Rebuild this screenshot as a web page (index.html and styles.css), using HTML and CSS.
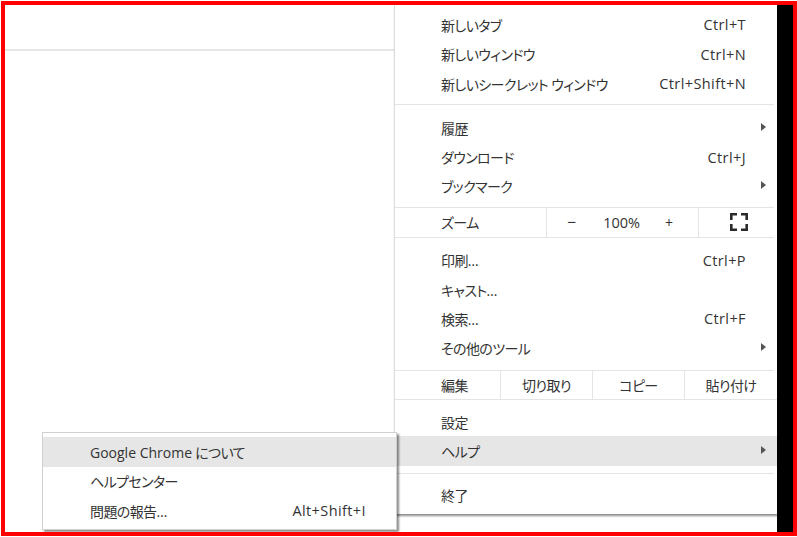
FILE: index.html
```html
<!DOCTYPE html>
<html lang="ja">
<head>
<meta charset="utf-8">
<title>Chrome menu</title>
<link rel="stylesheet" href="styles.css">
</head>
<body>
<div class="frame">
  <div class="page">
    <div class="toolbar"></div>
  </div>
  <div class="menu">
    <div class="item"><span class="label">新しいタブ</span><span class="key">Ctrl+T</span></div>
    <div class="item"><span class="label">新しいウィンドウ</span><span class="key">Ctrl+N</span></div>
    <div class="item"><span class="label">新しいシークレット ウィンドウ</span><span class="key">Ctrl+Shift+N</span></div>
    <div class="sep sep-a"></div>
    <div class="item"><span class="label">履歴</span><svg class="arrow" width="5" height="8" viewBox="0 0 5 8"><polygon points="0,0 5,4 0,8"/></svg></div>
    <div class="item"><span class="label">ダウンロード</span><span class="key">Ctrl+J</span></div>
    <div class="item"><span class="label">ブックマーク</span><svg class="arrow" width="5" height="8" viewBox="0 0 5 8"><polygon points="0,0 5,4 0,8"/></svg></div>
    <div class="sep sep-b"></div>
    <div class="zoomrow">
      <div class="cell cell-label">ズーム</div>
      <div class="cell zoomctl"><span class="minus">−</span><span class="pct">100%</span><span class="plus">+</span></div>
      <div class="cell cell-fs">
        <svg width="18" height="18" viewBox="0 0 18 18" fill="none" stroke="#2b2b2b" stroke-width="2.6">
          <path d="M1.3 7V1.3H7"/>
          <path d="M11 1.3H16.7V7"/>
          <path d="M1.3 11V16.7H7"/>
          <path d="M11 16.7H16.7V11"/>
        </svg>
      </div>
    </div>
    <div class="group-c">
      <div class="item"><span class="label">印刷…</span><span class="key">Ctrl+P</span></div>
      <div class="item"><span class="label">キャスト…</span></div>
      <div class="item"><span class="label">検索…</span><span class="key">Ctrl+F</span></div>
      <div class="item"><span class="label">その他のツール</span><svg class="arrow" width="5" height="8" viewBox="0 0 5 8"><polygon points="0,0 5,4 0,8"/></svg></div>
    </div>
    <div class="sep sep-c"></div>
    <div class="editrow">
      <div class="cell cell-label">編集</div>
      <div class="cell">切り取り</div>
      <div class="cell">コピー</div>
      <div class="cell">貼り付け</div>
    </div>
    <div class="group-d">
      <div class="item"><span class="label">設定</span></div>
      <div class="item hl"><span class="label">ヘルプ</span><svg class="arrow" width="5" height="8" viewBox="0 0 5 8"><polygon points="0,0 5,4 0,8"/></svg></div>
    </div>
    <div class="sep sep-d"></div>
    <div class="item"><span class="label">終了</span></div>
  </div>
  <div class="blackbar"></div>

  <div class="submenu">
    <div class="sitem hl"><span class="label"><span class="lat">Google Chrome</span> について</span></div>
    <div class="sitem"><span class="label">ヘルプセンター</span></div>
    <div class="sitem"><span class="label">問題の報告…</span><span class="skey">Alt+Shift+I</span></div>
  </div>
</div>
</body>
</html>
```

FILE: styles.css
```css
* { box-sizing: border-box; }

html, body {
  margin: 0;
  padding: 0;
  background: #ffffff;
}

body {
  font-family: "Open Sans", "Noto Sans CJK JP", sans-serif;
  font-size: 14px;
  font-feature-settings: "palt";
  color: #333333;
}

.frame {
  position: relative;
  margin: 1px 0 0 1px;
  width: 796px;
  height: 535px;
  border: 4px solid #ff0000;
  background: #ffffff;
  display: flex;
  align-items: flex-start;
  overflow: hidden;
}

.page {
  flex: 1;
  align-self: stretch;
}

.toolbar {
  height: 46px;
  border-bottom: 2px solid #e6e6e6;
}

.menu {
  width: 383px;
  flex: none;
  background: #ffffff;
  border-left: 1px solid #dcdcdc;
  padding: 5.3px 0 4px;
  box-shadow: 1px 2px 2px rgba(0, 0, 0, 0.45);
}

.blackbar {
  width: 16px;
  flex: none;
  align-self: stretch;
  background: #000000;
}

.item {
  display: flex;
  align-items: center;
  height: 29.3px;
  padding: 0 11px 0 46px;
  white-space: nowrap;
}

.label,
.cell {
  letter-spacing: -0.6px;
}

.item .label {
  flex: 1;
}

.key,
.skey,
.pct {
  font-size: 14.5px;
  letter-spacing: 0.4px;
}

.key {
  margin-right: 20px;
}

.arrow {
  fill: #555555;
  margin-top: -2px;
}

.hl {
  background: #e6e6e6;
}

.sep {
  height: 1px;
  background: #e4e4e4;
  margin-right: 3px;
}

.sep-a { margin-top: 5.5px; margin-bottom: 8.5px; }
.sep-b { margin-top: 5.9px; margin-bottom: 0; }
.sep-c { margin-top: 7px; margin-bottom: 0; }
.sep-d { margin-top: 6.8px; margin-bottom: 7.2px; }

.group-c { margin-top: 7.6px; }
.group-d { margin-top: 7.4px; }

.zoomrow {
  display: grid;
  grid-template-columns: 151px 152px 79px;
  height: 30px;
  border-bottom: 1px solid #e4e4e4;
  margin-right: 3px;
}

.editrow {
  display: grid;
  grid-template-columns: 105px 92px 92px 93px;
  height: 29px;
  border-bottom: 1px solid #e4e4e4;
}

.cell {
  display: flex;
  align-items: center;
  justify-content: center;
  white-space: nowrap;
}

.cell + .cell {
  border-left: 1px solid #e4e4e4;
}

.cell-label {
  justify-content: flex-start;
  padding-left: 46px;
}

.zoomctl {
  justify-content: space-between;
  padding: 0 25px 0 20px;
  letter-spacing: 0;
}

.minus {
  font-size: 16px;
}

.pct {
  margin-left: 2px;
  letter-spacing: 0;
}

.plus {
  font-size: 14px;
}

.cell-fs svg {
  display: block;
  margin-left: 2px;
}

.submenu {
  position: absolute;
  left: 37px;
  top: 427px;
  width: 355px;
  height: 98px;
  background: #ffffff;
  border: 1px solid #d0d0d0;
  padding-top: 4px;
  box-shadow: 2px 2px 2px rgba(0, 0, 0, 0.45);
}

.sitem {
  display: flex;
  align-items: center;
  height: 29.5px;
  padding: 0 30px 0 47px;
  white-space: nowrap;
}

.sitem .label {
  flex: 1;
}

.lat {
  letter-spacing: 0;
}
```
